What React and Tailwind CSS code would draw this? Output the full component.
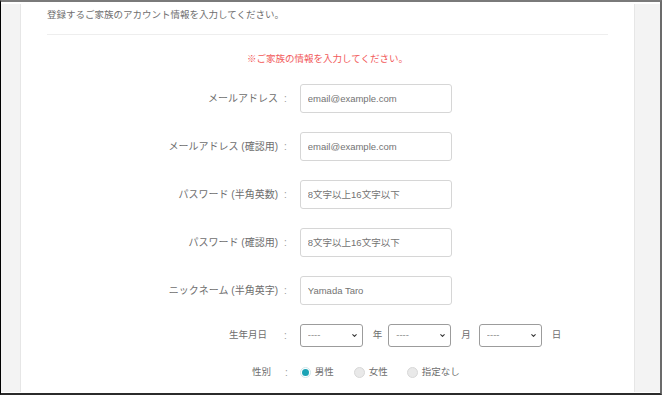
import { ChevronDown } from 'lucide-react';

const font = { fontFamily: '"Liberation Sans", "Noto Sans CJK JP", sans-serif' };

function Label({ children, width = 'w-[231px]', colonGap = 'ml-[6px]', size = 'text-[10px]' }) {
  return (
    <>
      <span className={`${width} ${size} shrink-0 text-right`}>{children}</span>
      <span className={`${colonGap} text-[10px] text-[#9a9a9a]`}>:</span>
    </>
  );
}

function TextRow({ label, placeholder }) {
  return (
    <div className="flex items-center">
      <Label>{label}</Label>
      <input
        type="text"
        placeholder={placeholder}
        className="ml-[13px] h-[29px] w-[152px] rounded-[3px] border border-[#d6d6d6] bg-white px-[7px] text-[9.5px] text-[#666] outline-none placeholder:text-[#737373]"
      />
    </div>
  );
}

function Select() {
  return (
    <div className="relative h-[23px] w-[63px]">
      <select className="h-full w-full appearance-none rounded-[3px] border border-[#9c9c9c] bg-white pl-[7px] text-[9.5px] text-[#888] outline-none">
        <option>----</option>
      </select>
      <ChevronDown className="pointer-events-none absolute right-[5px] top-[8px] h-[7px] w-[7px] text-[#333]" strokeWidth={3.5} />
    </div>
  );
}

function Radio({ checked, label, className = '' }) {
  return (
    <label className={`flex items-center ${className}`}>
      {checked ? (
        <span className="flex h-[11px] w-[11px] items-center justify-center rounded-full border border-[#cfe6ea] bg-white">
          <span className="h-[7px] w-[7px] rounded-full bg-[#1aa3b5]" />
        </span>
      ) : (
        <span className="h-[11px] w-[11px] rounded-full border border-[#d8d8d8] bg-[#e9e9e9]" />
      )}
      <span className="ml-[4px]">{label}</span>
    </label>
  );
}

export default function App() {
  return (
    <div className="h-[396px] w-[662px] overflow-hidden bg-white" style={font}>
      <div className="flex h-[395px] flex-col border-b-2 border-l border-r-2 border-t-2 border-b-[#2b2b2b] border-l-black border-r-[#6b6b6b] border-t-[#7a7a7a] pb-[1px] pt-[2px]">
        <div className="flex flex-1 bg-[#f3f3f3] pl-[19px] pr-[25px]">
          <div className="flex-1 border-x border-[#e6e6e6] bg-white px-[26px] pt-[4px] text-[9.5px] text-[#6e6e6e]">
            <p className="leading-[14px]">登録するご家族のアカウント情報を入力してください。</p>
            <div className="mt-[12px] border-b border-[#eeeeee]" />
            <p className="mt-[17px] text-center leading-[14px] text-[#f25a5a]">※ご家族の情報を入力してください。</p>

            <div className="mt-[18px] flex flex-col gap-[19px]">
              <TextRow label="メールアドレス" placeholder="email@example.com" />
              <TextRow label="メールアドレス (確認用)" placeholder="email@example.com" />
              <TextRow label="パスワード (半角英数)" placeholder="8文字以上16文字以下" />
              <TextRow label="パスワード (確認用)" placeholder="8文字以上16文字以下" />
              <TextRow label="ニックネーム (半角英字)" placeholder="Yamada Taro" />

              <div className="flex items-center">
                <Label width="w-[220px]" colonGap="ml-[17px]" size="text-[9.5px]">生年月日</Label>
                <div className="ml-[13px] flex items-center">
                  <Select />
                  <span className="ml-[10px]">年</span>
                  <span className="ml-[6px]"><Select /></span>
                  <span className="ml-[10px]">月</span>
                  <span className="ml-[8px]"><Select /></span>
                  <span className="ml-[10px]">日</span>
                </div>
              </div>

              <div className="-mt-[1px] flex items-center">
                <Label width="w-[224px]" colonGap="ml-[14px]" size="text-[9.5px]">性別</Label>
                <div className="ml-[12px] flex items-center">
                  <Radio checked label="男性" />
                  <Radio label="女性" className="ml-[20px]" />
                  <Radio label="指定なし" className="ml-[19px]" />
                </div>
              </div>
            </div>
          </div>
        </div>
      </div>
    </div>
  );
}
